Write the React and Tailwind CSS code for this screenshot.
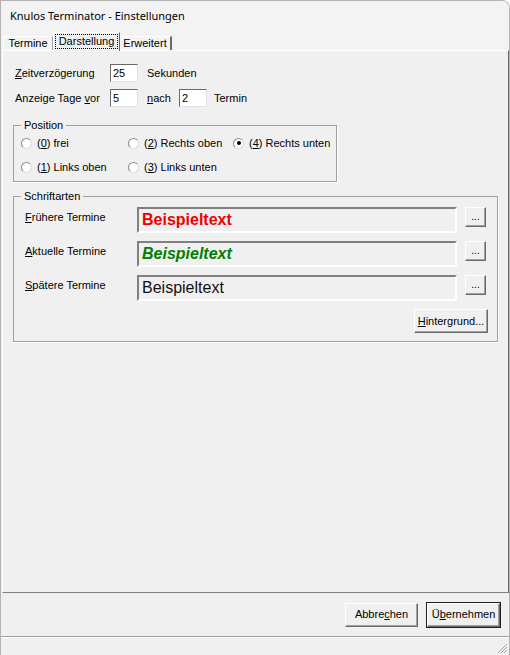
import React, { useState } from 'react';

const sunken = 'border border-t-[#696969] border-l-[#696969] border-r-[#e3e3e3] border-b-[#e3e3e3]';
const raised = 'border border-t-white border-l-white border-r-[#696969] border-b-[#696969] shadow-[inset_-1px_-1px_0_#a0a0a0]';

function Radio({ checked, onClick, children }) {
  return (
    <button type="button" onClick={onClick} className="flex items-center h-[16px] text-left">
      <span className="w-[11px] h-[11px] rounded-full bg-white border border-t-[#8a8a8a] border-l-[#8a8a8a] border-r-[#dcdcdc] border-b-[#dcdcdc] flex items-center justify-center shrink-0">
        {checked && <span className="w-[4px] h-[4px] rounded-full bg-black" />}
      </span>
      <span className="ml-[5px]">{children}</span>
    </button>
  );
}

function FontRow({ label, textClass }) {
  return (
    <div className="flex items-start">
      <span className="w-[112px] pl-[11px] mt-[4px] leading-[13px] box-content">{label}</span>
      <div className="w-[320px] h-[26px] flex items-center pl-[3px] bg-[#f0f0f0] border-2 border-t-[#808080] border-l-[#808080] border-r-white border-b-white">
        <span className={textClass} style={{ fontFamily: '"Liberation Sans", Arial, sans-serif' }}>Beispieltext</span>
      </div>
      <button type="button" className={`ml-[8px] w-[21px] h-[20px] bg-[#f0f0f0] ${raised} text-[10px] leading-none pb-[4px] flex items-end justify-center`}>
        ...
      </button>
    </div>
  );
}

function App() {
  const [position, setPosition] = useState(4);
  const [delay, setDelay] = useState('25');
  const [before, setBefore] = useState('5');
  const [after, setAfter] = useState('2');

  const positions = [
    [0, <><u>0</u>) frei</>],
    [2, <><u>2</u>) Rechts oben</>],
    [4, <><u>4</u>) Rechts unten</>],
    [1, <><u>1</u>) Links oben</>],
    [3, <><u>3</u>) Links unten</>],
  ];

  return (
    <div
      className="w-[510px] h-[655px] bg-[#f0f0f0] text-[11px] text-black flex flex-col border-t border-r border-l border-[#b4b4b4] rounded-tr-[8px] overflow-hidden"
      style={{ fontFamily: '"Liberation Sans", Arial, sans-serif' }}
    >
      {/* title bar */}
      <div className="h-[31px] pl-[9px] flex items-center bg-[#f3f3f3] text-[11px]" style={{ fontFamily: '"Noto Sans", "Open Sans", sans-serif' }}>
        Knulos Terminator - Einstellungen
      </div>

      {/* tabs */}
      <div className="h-[18px] pl-[2px] flex items-end bg-[#f3f3f3]">
        <div className="w-[50px] h-[14px] border-t border-l border-white border-r border-r-[#a0a0a0] flex items-center justify-center">
          Termine
        </div>
        <div className="relative z-10 -mb-[1px] w-[67px] h-[19px] bg-[#f0f0f0] border-t border-l border-white border-r border-r-[#696969] p-[1px] pb-[2px]">
          <div className="h-full border border-dotted border-black flex items-center justify-center">Darstellung</div>
        </div>
        <div className="w-[52px] h-[14px] border-t border-white border-r-2 border-r-[#696969] flex items-center justify-center">
          Erweitert
        </div>
      </div>

      {/* tab panel */}
      <div className="h-[543px] ml-[1px] border border-t-white border-l-white border-r-[#696969] border-b-[#808080] flex flex-col">
        <div className="flex items-center h-[18px] mt-[13px] pl-[12px]">
          <span className="w-[95px]"><u>Z</u>eitverzögerung</span>
          <input value={delay} onChange={(e) => setDelay(e.target.value)} className={`w-[28px] h-[18px] bg-white pl-[2px] outline-none ${sunken}`} />
          <span className="ml-[9px]">Sekunden</span>
        </div>
        <div className="flex items-center h-[18px] mt-[7px] pl-[12px]">
          <span className="w-[95px]">Anzeige Tage <u>v</u>or</span>
          <input value={before} onChange={(e) => setBefore(e.target.value)} className={`w-[28px] h-[18px] bg-white pl-[2px] outline-none ${sunken}`} />
          <span className="ml-[9px] w-[32px]"><u>n</u>ach</span>
          <input value={after} onChange={(e) => setAfter(e.target.value)} className={`w-[28px] h-[18px] bg-white pl-[2px] outline-none ${sunken}`} />
          <span className="ml-[7px]">Termin</span>
        </div>

        <fieldset className="mt-[12px] ml-[10px] w-[324px] border border-[#a0a0a0] shadow-[1px_1px_0_white]">
          <legend className="ml-[7px] px-[3px] leading-[13px]">Position</legend>
          <div className="pl-[7px] pt-[3px] pb-[6px] grid grid-cols-[107px_105px_1fr] gap-y-[8px]">
            {positions.map(([id, label]) => (
              <Radio key={id} checked={position === id} onClick={() => setPosition(id)}>
                ({label}
              </Radio>
            ))}
          </div>
        </fieldset>

        <fieldset className="mt-[8px] ml-[10px] w-[485px] border border-[#a0a0a0] shadow-[1px_1px_0_white]">
          <legend className="ml-[7px] px-[3px] leading-[13px]">Schriftarten</legend>
          <div className="pt-[4px] pb-[8px] flex flex-col gap-[8px]">
            <FontRow label={<><u>F</u>rühere Termine</>} textClass="text-[16px] font-bold text-[#f00000]" />
            <FontRow label={<><u>A</u>ktuelle Termine</>} textClass="text-[16px] font-bold italic text-[#008000]" />
            <FontRow label={<><u>S</u>pätere Termine</>} textClass="text-[16px] text-[#111]" />
            <div className="flex justify-end pr-[9px]">
              <button type="button" className={`w-[74px] h-[24px] bg-[#f0f0f0] ${raised}`}>
                <u>H</u>intergrund...
              </button>
            </div>
          </div>
        </fieldset>
      </div>

      {/* dialog buttons */}
      <div className="h-[43px] flex items-center justify-end pr-[8px] gap-[8px]">
        <button type="button" className={`w-[73px] h-[24px] bg-[#f0f0f0] ${raised}`}>
          Abbre<u>c</u>hen
        </button>
        <div className="border border-[#1e1e1e]">
          <button type="button" className={`w-[73px] h-[24px] bg-[#f0f0f0] ${raised}`}>
            Ü<u>b</u>ernehmen
          </button>
        </div>
      </div>

      {/* status bar */}
      <div className="flex-1 border-t border-[#a0a0a0] shadow-[inset_0_1px_0_white] flex items-end justify-end">
        <svg width="12" height="12" viewBox="0 0 12 12" className="mb-[1px] mr-[1px]">
          <path d="M11 2 L2 11 M11 5 L5 11 M11 8 L8 11" stroke="#a0a0a0" strokeWidth="1" />
          <path d="M11 3 L3 11 M11 6 L6 11 M11 9 L9 11" stroke="white" strokeWidth="1" />
        </svg>
      </div>
    </div>
  );
}

export default App;
